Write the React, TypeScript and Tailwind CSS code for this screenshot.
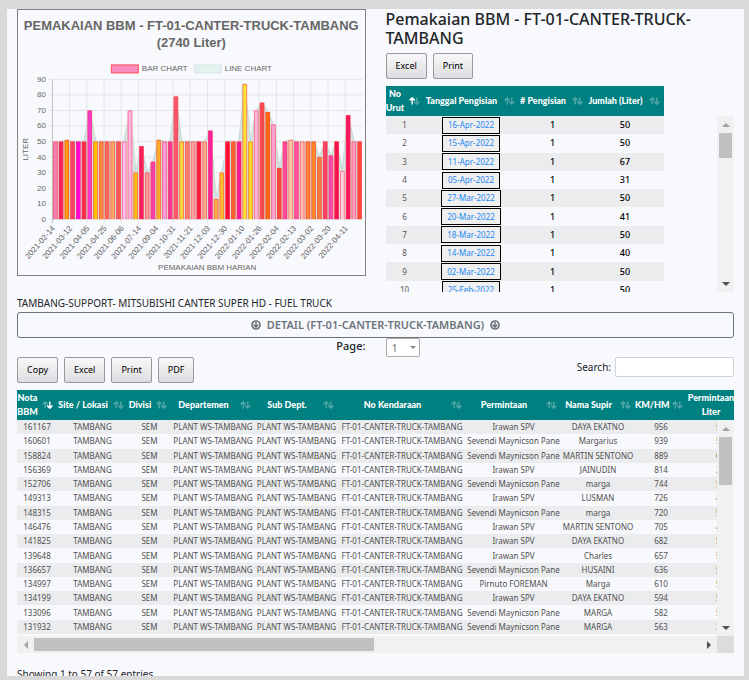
import React from "react";

type SortState = "none" | "asc" | "desc";

interface Column {
  title: string;
  width: number;
  sort: SortState;
}

const UI_FONT = "font-['Noto_Sans','Open_Sans',sans-serif]";

/* ---------- chart data ---------- */

const BARS: [number, string][] = [
  [50, "#f77fb4"], [50, "#f5245f"], [51, "#ff9a0a"], [50, "#fb4462"], [50, "#ff00e0"], [50, "#f52a4c"],
  [70, "#f83bd0"], [50, "#ffc400"], [50, "#f98a3a"], [50, "#f86a5a"], [50, "#fba563"], [50, "#fb5a58"],
  [50, "#fdbdf0"], [70, "#fbb6e6"], [30, "#ffbe14"], [47, "#fb1f5f"], [30, "#f8999b"], [37, "#f53fae"],
  [51, "#ffae26"], [50, "#f99be0"], [50, "#f5379a"], [79, "#f9596e"], [50, "#ffd03a"], [50, "#f9806a"],
  [50, "#f9a3a3"], [50, "#fb1c3a"], [50, "#fba98c"], [57, "#fb1fa4"], [13, "#fdb04a"], [30, "#ffbd2e"],
  [50, "#ff0a33"], [50, "#fb642e"], [50, "#f5189a"], [87, "#ffe23c"], [50, "#ffdc1e"], [70, "#fbb5dc"],
  [75, "#fb4a50"], [69, "#ff6a0a"], [61, "#f9a4d2"], [33, "#f9483c"], [50, "#fb4a9a"], [51, "#fdc9a6"],
  [50, "#fb4fa4"], [50, "#fdbab4"], [50, "#f98232"], [50, "#fb8a24"], [40, "#fb7c3a"], [50, "#fb4464"],
  [41, "#fb4ab0"], [50, "#f50f50"], [31, "#fdd0e0"], [67, "#fb1560"], [50, "#fb9cc4"], [50, "#fb4a3c"],
];

const DATE_LABELS = [
  "2021-02-14", "2021-03-12", "2021-04-05", "2021-04-25", "2021-06-06", "2021-07-14",
  "2021-09-04", "2021-10-31", "2021-11-21", "2021-12-03", "2021-12-30", "2022-01-10",
  "2022-01-26", "2022-02-04", "2022-02-13", "2022-03-02", "2022-03-20", "2022-04-11",
];

const PLOT = { left: 34.5, right: 345, top: 69.5, bottom: 209.5 };
const STEP = (PLOT.right - PLOT.left) / BARS.length;
const yOf = (v: number) => PLOT.bottom - (v * (PLOT.bottom - PLOT.top)) / 90;
const xOf = (i: number) => PLOT.left + STEP * (i + 0.5);

function FuelChart() {
  const line = BARS.map(([v], i) => `${xOf(i)},${yOf(v)}`).join(" ");
  const area = `${xOf(0)},${PLOT.bottom} ${line} ${xOf(BARS.length - 1)},${PLOT.bottom}`;
  return (
    <svg
      viewBox="0 0 347 265"
      role="img"
      aria-label="Pemakaian BBM harian"
      className="block h-auto w-full font-['Liberation_Sans',Arial,sans-serif]"
      fill="#666666"
    >
      <text x="173.5" y="20" fontSize="13" fontWeight="700" textAnchor="middle">
        PEMAKAIAN BBM - FT-01-CANTER-TRUCK-TAMBANG
      </text>
      <text x="173.5" y="37" fontSize="13" fontWeight="700" textAnchor="middle">
        (2740 Liter)
      </text>

      <rect x="93.5" y="55" width="27" height="8" fill="#f98cc0" stroke="#ff4d57" />
      <text x="124" y="61" fontSize="8">BAR CHART</text>
      <rect x="176.5" y="55" width="27" height="8" fill="#e4f1ef" stroke="#d5e6e3" />
      <text x="207" y="61" fontSize="8">LINE CHART</text>

      <g stroke="#e4e6e9">
        {Array.from({ length: 10 }, (_, n) => (
          <line key={n} x1={PLOT.left - 4} x2={PLOT.right} y1={yOf(n * 10)} y2={yOf(n * 10)} />
        ))}
        {DATE_LABELS.map((d, n) => (
          <line
            key={d}
            x1={PLOT.left + n * 3 * STEP}
            x2={PLOT.left + n * 3 * STEP}
            y1={PLOT.top}
            y2={PLOT.bottom + 4}
            stroke={n === 0 ? "#bfc1c4" : "#e4e6e9"}
          />
        ))}
      </g>

      <polygon points={area} fill="#d3e3e1" fillOpacity="0.85" />
      <polyline points={line} fill="none" stroke="#cddcda" strokeWidth="1.5" strokeLinejoin="round" />

      {BARS.map(([v, color], i) => (
        <g key={i}>
          <rect x={xOf(i) - 2.2} y={yOf(v)} width="4.4" height={PLOT.bottom - yOf(v)} fill={color} />
          <path
            d={`M${xOf(i) - 1.9} ${PLOT.bottom}V${yOf(v) + 0.4}H${xOf(i) + 1.9}V${PLOT.bottom}`}
            fill="none"
            stroke="#ff4048"
            strokeWidth="0.8"
            strokeOpacity="0.7"
          />
        </g>
      ))}

      {Array.from({ length: 10 }, (_, n) => (
        <text key={n} x="28" y={yOf(n * 10) + 2.5} fontSize="8" textAnchor="end">
          {n * 10}
        </text>
      ))}
      {DATE_LABELS.map((d, n) => (
        <text
          key={d}
          transform={`translate(${PLOT.left + 3 + n * 3 * STEP} 219) rotate(-49)`}
          fontSize="8"
          textAnchor="end"
        >
          {d}
        </text>
      ))}
      <text x="189.5" y="260" fontSize="8" textAnchor="middle">PEMAKAIAN BBM HARIAN</text>
      <text transform="translate(10 139.5) rotate(-90)" fontSize="8" textAnchor="middle">LITER</text>
    </svg>
  );
}

/* ---------- shared pieces ---------- */

function SortIcon({ sort }: { sort: SortState }) {
  return (
    <svg
      viewBox="0 0 11 8"
      aria-hidden="true"
      className="absolute right-1 top-1/2 h-2 w-[11px] -translate-y-1/2"
      fill="none"
      stroke="#ffffff"
      strokeWidth="1.5"
    >
      <path d="M3.2 7.5V1M0.6 3.4L3.2 0.9L5.8 3.4" strokeOpacity={sort === "asc" ? 1 : 0.3} />
      <path d="M7.8 0.5V7M5.2 4.6L7.8 7.1L10.4 4.6" strokeOpacity={sort === "desc" ? 1 : 0.3} />
    </svg>
  );
}

function TableHead({ columns }: { columns: Column[] }) {
  return (
    <>
      <colgroup>
        {columns.map((c) => (
          <col key={c.title} style={{ width: c.width }} />
        ))}
      </colgroup>
      <thead>
        <tr className="h-[30px] bg-[#008080]">
          {columns.map((c) => (
            <th
              key={c.title}
              scope="col"
              className="relative h-[30px] p-0 pr-[19px] text-center font-['Lato','Noto_Sans',sans-serif] text-[9px] leading-[14px] font-black whitespace-pre text-white"
            >
              {c.title}
              <SortIcon sort={c.sort} />
            </th>
          ))}
        </tr>
      </thead>
    </>
  );
}

function VerticalScrollbar({ thumb }: { thumb: string }) {
  return (
    <div aria-hidden="true" className="absolute top-[30px] right-0 bottom-0 flex w-[17px] flex-col items-center bg-[#f1f1f1]">
      <span className="flex h-[17px] items-center">
        <svg viewBox="0 0 8 4" className="h-1 w-2" fill="#a3a3a3"><path d="M4 0L8 4H0Z" /></svg>
      </span>
      <span className={`w-[13px] bg-[#c1c1c1] ${thumb}`} />
      <span className="mt-auto flex h-[17px] items-center">
        <svg viewBox="0 0 8 4" className="h-1 w-2" fill="#505050"><path d="M0 0H8L4 4Z" /></svg>
      </span>
    </div>
  );
}

function ToolButton({ children }: { children: React.ReactNode }) {
  return (
    <button
      type="button"
      className="h-[26px] rounded-[2px] border border-[#999999] bg-linear-to-b from-[#f9f9fa] to-[#dcdde0] px-[9px] text-[9px] text-black"
    >
      {children}
    </button>
  );
}

function ArrowCircle() {
  return (
    <svg viewBox="0 0 10 10" aria-hidden="true" className="size-[10px]" fill="none" stroke="currentColor" strokeWidth="1.7">
      <circle cx="5" cy="5" r="4" />
      <path d="M5 2V7M2.7 4.8L5 7.1L7.3 4.8" strokeWidth="1.5" />
    </svg>
  );
}

/* ---------- summary table ---------- */

const SUMMARY_COLUMNS: Column[] = [
  { title: "No\nUrut", width: 38, sort: "asc" },
  { title: "Tanggal Pengisian", width: 95, sort: "none" },
  { title: "# Pengisian", width: 68, sort: "none" },
  { title: "Jumlah (Liter)", width: 77, sort: "none" },
];

const SUMMARY_ROWS: [string, number][] = [
  ["16-Apr-2022", 50], ["15-Apr-2022", 50], ["11-Apr-2022", 67], ["05-Apr-2022", 31], ["27-Mar-2022", 50],
  ["20-Mar-2022", 41], ["18-Mar-2022", 50], ["14-Mar-2022", 40], ["02-Mar-2022", 50], ["25-Feb-2022", 50],
];

function SummaryTable() {
  return (
    <div className="relative h-[206px] overflow-hidden">
      <table className="h-[213px] w-[278px] table-fixed border-collapse text-center text-[8px] leading-3">
        <TableHead columns={SUMMARY_COLUMNS} />
        <tbody>
          {SUMMARY_ROWS.map(([date, liter], i) => (
            <tr key={date} className="odd:bg-[#ebecee]">
              <td className="p-0 text-[#555555]">{i + 1}</td>
              <td className="p-0">
                <button type="button" className="h-[17px] border border-black bg-[#efefef] px-[5px] align-top text-[#2087f5]">
                  {date}
                </button>
              </td>
              <td className="p-0 text-[9px] font-medium text-black">1</td>
              <td className="p-0 text-[9px] font-medium text-black">{liter}</td>
            </tr>
          ))}
        </tbody>
      </table>
      <VerticalScrollbar thumb="h-[25px]" />
    </div>
  );
}

/* ---------- detail table ---------- */

const DETAIL_COLUMNS: Column[] = [
  { title: "Nota\nBBM", width: 40, sort: "desc" },
  { title: "Site / Lokasi", width: 71, sort: "none" },
  { title: "Divisi", width: 43, sort: "none" },
  { title: "Departemen", width: 84, sort: "none" },
  { title: "Sub Dept.", width: 83, sort: "none" },
  { title: "No Kendaraan", width: 128, sort: "none" },
  { title: "Permintaan", width: 95, sort: "none" },
  { title: "Nama Supir", width: 74, sort: "none" },
  { title: "KM/HM", width: 52, sort: "none" },
  { title: "Permintaan\nLiter", width: 67, sort: "none" },
];

const PANE = "Sevendi Maynicson Pane";
const IRAWAN = "Irawan SPV";

const DETAIL_ROWS: [number, string, string, number, number][] = [
  [161167, IRAWAN, "DAYA EKATNO", 956, 50],
  [160601, PANE, "Margarius", 939, 50],
  [158824, PANE, "MARTIN SENTONO", 889, 67],
  [156369, IRAWAN, "JAINUDIN", 814, 31],
  [152706, PANE, "marga", 744, 50],
  [149313, IRAWAN, "LUSMAN", 726, 41],
  [148315, PANE, "marga", 720, 50],
  [146476, IRAWAN, "MARTIN SENTONO", 705, 40],
  [141825, IRAWAN, "DAYA EKATNO", 682, 50],
  [139648, IRAWAN, "Charles", 657, 50],
  [136657, PANE, "HUSAINI", 636, 50],
  [134997, "Pirnuto FOREMAN", "Marga", 610, 50],
  [134199, IRAWAN, "DAYA EKATNO", 594, 50],
  [133096, PANE, "MARGA", 582, 50],
  [131932, PANE, "MARGA", 563, 33],
];

function DetailTable() {
  return (
    <div>
      <div className="relative h-[246px] overflow-hidden">
        <table className="h-[244px] w-[737px] table-fixed border-collapse text-center text-[8px] leading-3 whitespace-nowrap text-[#505050]">
          <TableHead columns={DETAIL_COLUMNS} />
          <tbody>
            {DETAIL_ROWS.map(([nota, requester, driver, km, liter]) => (
              <tr key={nota} className="odd:bg-[#ebecee]">
                <td className="p-0">{nota}</td>
                <td className="p-0">TAMBANG</td>
                <td className="p-0">SEM</td>
                <td className="p-0">PLANT WS-TAMBANG</td>
                <td className="p-0">PLANT WS-TAMBANG</td>
                <td className="p-0">FT-01-CANTER-TRUCK-TAMBANG</td>
                <td className="p-0">{requester}</td>
                <td className="p-0">{driver}</td>
                <td className="p-0">{km}</td>
                <td className="p-0">{liter}</td>
              </tr>
            ))}
          </tbody>
        </table>
        <VerticalScrollbar thumb="h-12" />
      </div>
      <div aria-hidden="true" className="flex h-[17px] bg-[#f1f1f1]">
        <span className="flex w-[17px] items-center justify-center">
          <svg viewBox="0 0 4 8" className="h-2 w-1" fill="#a3a3a3"><path d="M4 0V8L0 4Z" /></svg>
        </span>
        <span className="my-0.5 w-[340px] bg-[#c1c1c1]" />
        <span className="ml-auto flex w-[17px] items-center justify-center">
          <svg viewBox="0 0 4 8" className="h-2 w-1" fill="#505050"><path d="M0 0V8L4 4Z" /></svg>
        </span>
        <span className="w-[17px] bg-[#dcdcdc]" />
      </div>
    </div>
  );
}

/* ---------- page ---------- */

export default function App() {
  return (
    <div className={`h-screen overflow-hidden bg-[#d9d9d9] pt-[9px] pr-[5px] pb-1 pl-[7px] text-[#212529] ${UI_FONT}`}>
      <main className="h-full overflow-hidden bg-[#f8f9fc] px-[10px]">
        <section className="grid grid-cols-2 items-start gap-5">
          <div className="border border-[#808080]">
            <FuelChart />
          </div>
          <div>
            <h1 className="pt-px text-[16px] leading-[19px] font-medium">
              Pemakaian BBM - FT-01-CANTER-TRUCK-TAMBANG
            </h1>
            <div className="mt-[5px] mb-[7px] flex gap-1.5">
              <ToolButton>Excel</ToolButton>
              <ToolButton>Print</ToolButton>
            </div>
            <SummaryTable />
          </div>
        </section>

        <p className="pt-[3px] text-[10px] leading-[17px]">
          TAMBANG-SUPPORT- MITSUBISHI CANTER SUPER HD - FUEL TRUCK
        </p>
        <button
          type="button"
          className="flex h-[26px] w-full items-center justify-center gap-1.5 rounded-[3px] border border-[#6c757d] text-[11px] font-semibold text-[#6c757d]"
        >
          <ArrowCircle />
          DETAIL (FT-01-CANTER-TRUCK-TAMBANG)
          <ArrowCircle />
        </button>

        <div className="grid grid-cols-2 gap-5">
          <label htmlFor="page" className="text-right text-[11px] leading-4 font-medium">Page:</label>
          <div className="relative w-[34px]">
            <select
              id="page"
              defaultValue="1"
              className="block h-[19px] w-full appearance-none rounded-[2px] border border-[#aaaaaa] bg-white pl-[5px] text-[11px] leading-4 text-[#777777]"
            >
              <option value="1">1</option>
            </select>
            <svg viewBox="0 0 6 3" aria-hidden="true" className="pointer-events-none absolute top-2 right-1 h-[3px] w-1.5" fill="#888888">
              <path d="M0 0H6L3 3Z" />
            </svg>
          </div>
        </div>

        <div className="mb-[7px] flex items-start justify-between">
          <div className="flex gap-1.5">
            <ToolButton>Copy</ToolButton>
            <ToolButton>Excel</ToolButton>
            <ToolButton>Print</ToolButton>
            <ToolButton>PDF</ToolButton>
          </div>
          <div className="flex items-center gap-1">
            <label htmlFor="search" className="text-[10px]">Search:</label>
            <input
              id="search"
              type="search"
              className="h-5 w-[119px] rounded-[2px] border border-[#ced4da] bg-white px-1 text-[10px]"
            />
          </div>
        </div>

        <DetailTable />
        <p className="pt-[13px] text-[10px] leading-[17px]">Showing 1 to 57 of 57 entries</p>
      </main>
    </div>
  );
}
